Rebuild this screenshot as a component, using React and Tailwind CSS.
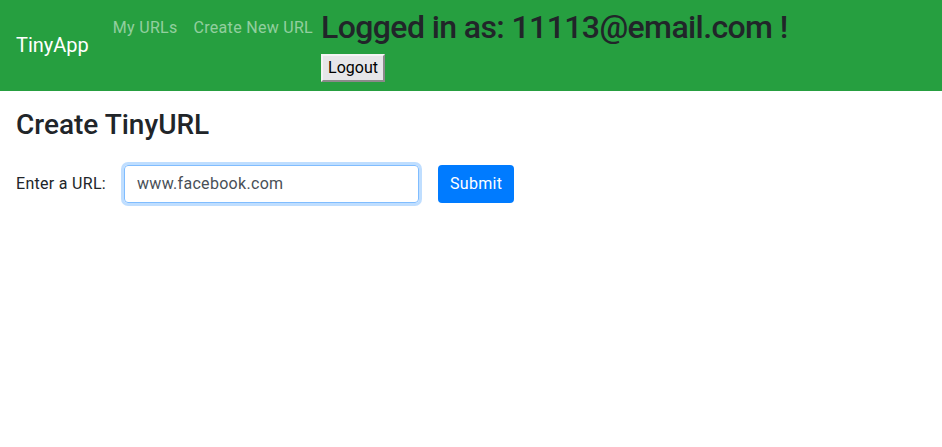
export default function App() {
  return (
    <div className="min-h-[447px] bg-white font-['Roboto',sans-serif] tracking-[0.3px] text-[#212529]">
      {/* Navbar */}
      <nav className="flex items-center bg-[#269f40] px-4 pt-2 pb-[9px]">
        <a className="mr-4 text-[20px] leading-[30px] tracking-normal text-white">TinyApp</a>
        <ul className="flex">
          <li>
            <a className="block px-2 py-2 text-[16px] leading-6 text-white/50">My URLs</a>
          </li>
          <li>
            <a className="block px-2 py-2 text-[16px] leading-6 text-white/50">Create New URL</a>
          </li>
          <li>
            <h2 className="mb-2 text-[32px] font-medium leading-[1.2] tracking-[-0.6px] text-[#212529]">
              Logged in as: 11113@email.com !
            </h2>
            <form>
              <button
                type="button"
                className="border-2 border-t-[#f4f4f4] border-l-[#f4f4f4] border-r-[#8a8a8a] border-b-[#8a8a8a] bg-[#e6e6e9] px-[5px] text-[16px] leading-6 tracking-normal text-black"
              >
                Logout
              </button>
            </form>
          </li>
        </ul>
      </nav>

      {/* Main */}
      <main className="px-4 pt-[17px]">
        <h3 className="mb-2 text-[28px] font-medium leading-[1.2] tracking-normal">Create TinyURL</h3>
        <form className="mt-[23px] flex items-center">
          <label className="mr-[18px] text-[16px] leading-6">Enter a URL:</label>
          <input
            type="text"
            defaultValue="www.facebook.com"
            className="h-[38px] w-[295px] rounded border border-[#80bdff] px-3 text-[16px] text-[#495057] shadow-[0_0_0_3px_rgba(0,123,255,0.25)] outline-none"
          />
          <button
            type="button"
            className="ml-[19px] h-[38px] rounded bg-[#007bff] px-3 text-[16px] text-white"
          >
            Submit
          </button>
        </form>
      </main>
    </div>
  )
}
